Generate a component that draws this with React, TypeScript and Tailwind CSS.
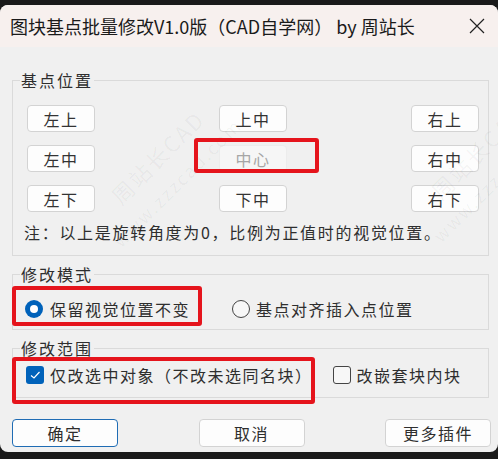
import React from 'react';

var FONT = "font-['Noto_Sans_CJK_SC','Noto_Sans',sans-serif]";

function Btn(props: { label: string; disabled?: boolean }) {
  return (
    <div
      className={"w-[68px] h-[27px] rounded-[4px] border flex items-center justify-center text-[16px] tracking-[1.5px] " +
        (props.disabled ? "bg-[#f6f6f6] border-[#ececec] text-[#a6a6a6]" : "bg-[#fdfdfd] border-[#d3d3d3] text-[#333]")}
    >
      {props.label}
    </div>
  );
}

// faint diagonal site watermark
function Watermark(props: { x: number; y: number }) {
  return (
    <div
      className="absolute pointer-events-none text-[#000]/[0.045] -rotate-45 origin-top-left leading-[26px] whitespace-nowrap"
      style={{ left: props.x, top: props.y }}
    >
      <div className="text-[22px] tracking-[2px]">周站长CAD</div>
      <div className="text-[18px] tracking-[2px] mt-[6px] -ml-[30px]">www.zzzcad.com</div>
    </div>
  );
}

export default function App() {
  return (
    <div className={"relative w-[498px] h-[459px] bg-[#1a1a1a] pt-[5px] overflow-hidden " + FONT}>
      <div className="w-[498px] h-[447px] rounded-[8px] bg-[#f0f0f0] overflow-hidden flex flex-col">

        {/* Title bar */}
        <div className="h-[42px] shrink-0 bg-[#f7f0ee] flex items-center pl-[10px] pr-[13px]">
          <div className="flex-1 text-[18px] text-[#1a1a1a] leading-none">图块基点批量修改V1.0版（CAD自学网） by 周站长</div>
          <svg width="16" height="16" viewBox="0 0 16 16">
            <path d="M1 1 L15 15 M15 1 L1 15" stroke="#222" strokeWidth="1.2" />
          </svg>
        </div>

        {/* Body */}
        <div className="relative flex-1 pl-[12px] pr-[7px] pt-[22px] text-[#2e2e2e]">

          {/* 基点位置 */}
          <fieldset className="w-[477px] h-[187px] border border-[#dadada]">
            <legend className="ml-[7px] px-[1px] text-[16px] leading-[22px] tracking-[2px]">基点位置</legend>
            <div className="pt-[14px] pl-[14px] pr-[9px] flex flex-col gap-[13px]">
              <div className="flex justify-between">
                <Btn label="左上" />
                <Btn label="上中" />
                <Btn label="右上" />
              </div>
              <div className="flex justify-between">
                <Btn label="左中" />
                <Btn label="中心" disabled />
                <Btn label="右中" />
              </div>
              <div className="flex justify-between">
                <Btn label="左下" />
                <Btn label="下中" />
                <Btn label="右下" />
              </div>
            </div>
            <div className="mt-[9px] pl-[11px] text-[16px] leading-[22px] tracking-[1.7px]">注：以上是旋转角度为0，比例为正值时的视觉位置。</div>
          </fieldset>

          {/* 修改模式 */}
          <fieldset className="mt-[7px] w-[477px] h-[67px] border border-[#dadada]">
            <legend className="ml-[7px] px-[1px] text-[16px] leading-[22px] tracking-[2px]">修改模式</legend>
            <div className="pt-[13px] pl-[12px] flex items-center h-[35px] text-[16px] tracking-[1.5px]">
              <div className="w-[18px] h-[18px] rounded-full bg-[#0062ba] flex items-center justify-center">
                <div className="w-[8px] h-[8px] rounded-full bg-white" />
              </div>
              <span className="ml-[7px] leading-[22px]">保留视觉位置不变</span>
              <div className="ml-[42px] w-[18px] h-[18px] rounded-full border border-[#444] bg-[#f7f7f7]" />
              <span className="ml-[6px] leading-[22px]">基点对齐插入点位置</span>
            </div>
          </fieldset>

          {/* 修改范围 */}
          <fieldset className="mt-[7px] w-[477px] h-[61px] border border-[#dadada]">
            <legend className="ml-[7px] px-[1px] text-[16px] leading-[22px] tracking-[2px]">修改范围</legend>
            <div className="pt-[5px] pl-[13px] flex items-center h-[27px] text-[16px] tracking-[1.5px]">
              <div className="w-[18px] h-[18px] rounded-[3px] bg-[#0062ba] flex items-center justify-center">
                <svg width="12" height="12" viewBox="0 0 12 12">
                  <path d="M2 6.5 L5 9 L10.5 3" fill="none" stroke="white" strokeWidth="1.2" />
                </svg>
              </div>
              <span className="ml-[6px] leading-[22px] whitespace-nowrap">仅改选中对象（不改未选同名块）</span>
              <div className="ml-[20px] w-[18px] h-[18px] rounded-[3px] border border-[#444] bg-[#f7f7f7]" />
              <span className="ml-[6px] leading-[22px]">改嵌套块内块</span>
            </div>
          </fieldset>

          {/* Buttons */}
          <div className="mt-[21px] flex justify-between text-[16px] tracking-[1.5px]">
            <div className="w-[106px] h-[28px] rounded-[4px] border border-[#1f6cb4] bg-[#fdfdfd] flex items-center justify-center">确定</div>
            <div className="w-[106px] h-[28px] rounded-[4px] border border-[#d3d3d3] bg-[#fdfdfd] flex items-center justify-center">取消</div>
            <div className="w-[106px] h-[28px] rounded-[4px] border border-[#d3d3d3] bg-[#fdfdfd] flex items-center justify-center">更多插件</div>
          </div>
        </div>
      </div>

      <Watermark x={105} y={190} />
      <Watermark x={425} y={185} />

      {/* red annotation boxes */}
      <div className="absolute left-[194px] top-[138px] w-[125px] h-[35px] border-[4px] border-[#e5141c] rounded-[3px]" />
      <div className="absolute left-[12px] top-[286px] w-[190px] h-[40px] border-[4px] border-[#e5141c] rounded-[3px]" />
      <div className="absolute left-[12px] top-[357px] w-[303px] h-[47px] border-[4px] border-[#e5141c] rounded-[3px]" />
    </div>
  );
}
